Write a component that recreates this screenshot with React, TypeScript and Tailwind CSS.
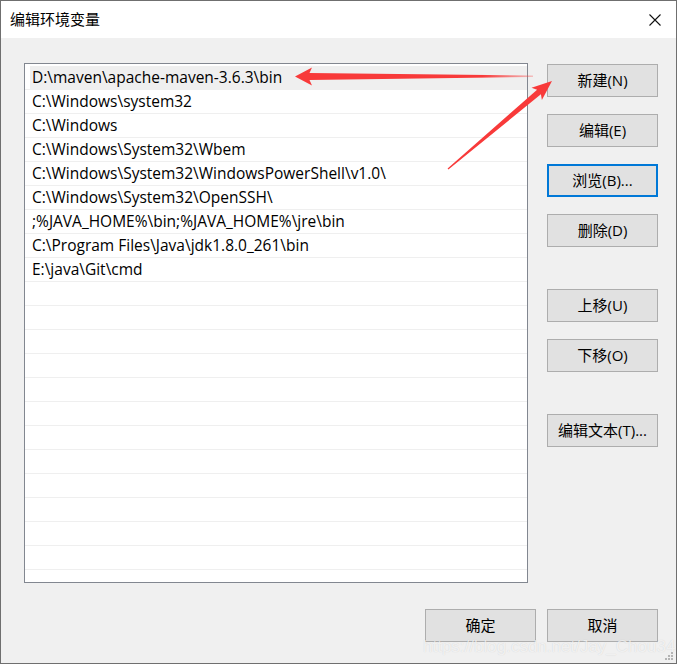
import React from 'react';

const paths = [
  'D:\\maven\\apache-maven-3.6.3\\bin',
  'C:\\Windows\\system32',
  'C:\\Windows',
  'C:\\Windows\\System32\\Wbem',
  'C:\\Windows\\System32\\WindowsPowerShell\\v1.0\\',
  'C:\\Windows\\System32\\OpenSSH\\',
  ';%JAVA_HOME%\\bin;%JAVA_HOME%\\jre\\bin',
  'C:\\Program Files\\Java\\jdk1.8.0_261\\bin',
  'E:\\java\\Git\\cmd',
];

const FONT = { fontFamily: '"Open Sans", "Noto Sans CJK SC", sans-serif' };

function WinButton({ label, focused = false }: { label: string; focused?: boolean }) {
  return (
    <button
      className={
        'w-[111px] h-[33px] bg-[#e1e1e1] text-[15px] text-black flex items-center justify-center leading-none ' +
        (focused ? 'border-2 border-[#0078d7]' : 'border border-[#adadad]')
      }
    >
      {label}
    </button>
  );
}

function Annotations() {
  return (
    <svg className="absolute inset-0 pointer-events-none" width="677" height="664" viewBox="0 0 677 664">
      <defs>
        <linearGradient id="fade" x1="294" y1="0" x2="534" y2="0" gradientUnits="userSpaceOnUse">
          <stop offset="0" stopColor="#f83a3a" />
          <stop offset="0.78" stopColor="#f83a3a" />
          <stop offset="1" stopColor="#f83a3a" stopOpacity="0.25" />
        </linearGradient>
      </defs>
      <polygon
        points="294,75.5 311,66.5 308.5,72 532,74.4 532,76 308.5,79 311,84.5"
        fill="url(#fade)"
      />
      <polygon
        points="551,80 540.9,99 539.9,93.3 447.4,168.5 446.6,167.5 536.1,88.7 530.5,86.8"
        fill="#f83a3a"
      />
    </svg>
  );
}

export default function App() {
  const rows = Array.from({ length: 22 }, (_, i) => paths[i] ?? '');

  return (
    <div
      className="relative w-[677px] h-[664px] border border-[#6f6f6f] bg-[#f0f0f0] overflow-hidden flex flex-col"
      style={FONT}
    >
      {/* title bar */}
      <div className="h-[37px] bg-white flex items-center justify-between pl-[9px] pr-[15px] shrink-0">
        <span className="text-[15px] text-black">编辑环境变量</span>
        <svg width="12" height="12" viewBox="0 0 12 12">
          <path d="M0.5 0.5 L11.5 11.5 M11.5 0.5 L0.5 11.5" stroke="#111" strokeWidth="1.1" />
        </svg>
      </div>

      {/* body */}
      <div className="flex pl-[23px] pt-[25px]">
        <div className="w-[504px] h-[520px] border border-[#828790] bg-white pt-[2px] overflow-hidden">
          {rows.map((p, i) => (
            <div key={i} className="h-[24px] border-b border-[#efefef] flex">
              <div
                className={
                  'flex-1 flex items-center text-[15.5px] text-black pl-[2px] ml-[5px] whitespace-nowrap ' +
                  (i === 0 ? 'bg-[#efefef]' : '')
                }
              >
                {p}
              </div>
            </div>
          ))}
        </div>

        <div className="ml-[19px] mt-[1px] flex flex-col">
          <div className="flex flex-col gap-[17px]">
            <WinButton label="新建(N)" />
            <WinButton label="编辑(E)" />
            <WinButton label="浏览(B)..." focused />
            <WinButton label="删除(D)" />
          </div>
          <div className="mt-[42px] flex flex-col gap-[17px]">
            <WinButton label="上移(U)" />
            <WinButton label="下移(O)" />
          </div>
          <div className="mt-[42px]">
            <WinButton label="编辑文本(T)..." />
          </div>
        </div>
      </div>

      {/* footer */}
      <div className="flex justify-end gap-[11px] pr-[18px] mt-[26px]">
        <WinButton label="确定" />
        <WinButton label="取消" />
      </div>

      <Annotations />

      {/* watermark */}
      <span
        className="absolute left-[422px] top-[636px] text-[17px] leading-[20px] text-white/70 whitespace-nowrap pointer-events-none"
        style={{ fontFamily: '"Liberation Sans", Arial, sans-serif', textShadow: '0 0 1px rgba(0,0,0,0.15)' }}
      >
        https://blog.csdn.net/Jay_Chou345
      </span>

      {/* size grip */}
      <svg className="absolute right-[2px] bottom-[2px]" width="10" height="10" viewBox="0 0 10 10">
        <rect x="7" y="1" width="2" height="2" fill="#b4b4b4" />
        <rect x="7" y="4" width="2" height="2" fill="#b4b4b4" />
        <rect x="4" y="4" width="2" height="2" fill="#b4b4b4" />
        <rect x="7" y="7" width="2" height="2" fill="#b4b4b4" />
        <rect x="4" y="7" width="2" height="2" fill="#b4b4b4" />
        <rect x="1" y="7" width="2" height="2" fill="#b4b4b4" />
      </svg>
    </div>
  );
}
